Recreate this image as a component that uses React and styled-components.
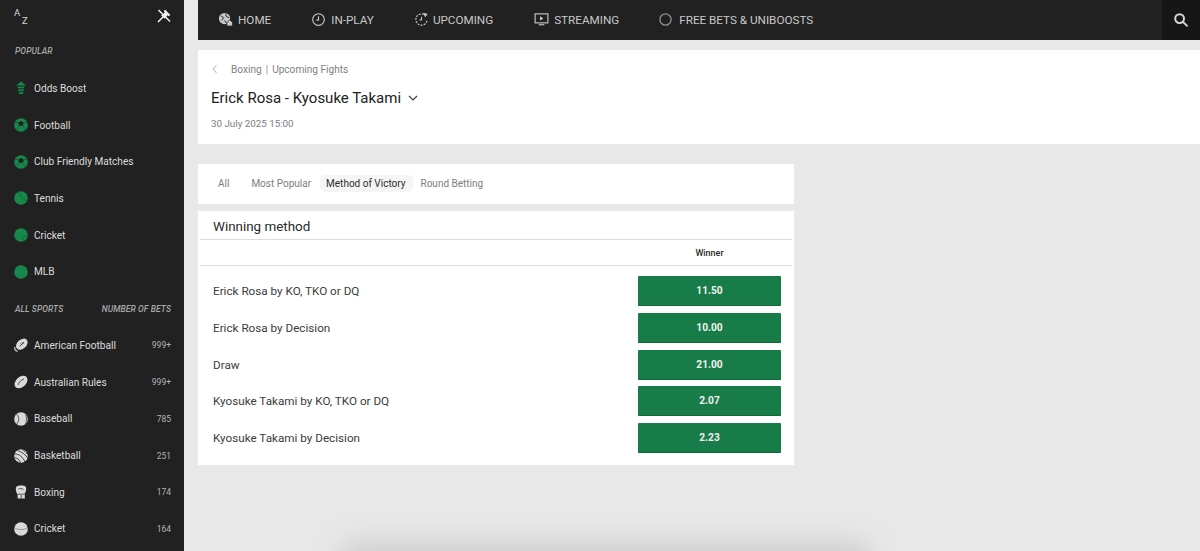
import React from 'react';
import styled, { createGlobalStyle } from 'styled-components';

const GlobalStyle = createGlobalStyle`
  html, body {
    margin: 0;
    height: 100%;
    overflow: hidden;
    background: #e8e8e8;
    font-family: Roboto, "Liberation Sans", sans-serif;
  }
  * { box-sizing: border-box; }
`;

const Page = styled.div`
  position: relative;
  display: flex;
  width: 1200px;
  height: 551px;
  overflow: hidden;
  background: #e8e8e8;
`;

const Sidebar = styled.aside`
  flex: 0 0 184px;
  height: 551px;
  padding: 0 13px 0 14px;
  background: #212121;
  overflow: hidden;
`;

const SideTop = styled.div`
  display: flex;
  justify-content: space-between;
  align-items: center;
  height: 32px;
`;

const AzMark = styled.div`
  position: relative;
  width: 16px;
  height: 18px;
  color: #d8d8d8;
  font-size: 9.5px;
  line-height: 9px;
`;

const AzLetter = styled.span`
  position: absolute;
  left: ${(p) => p.$x}px;
  top: ${(p) => p.$y}px;
`;

const SectionLabel = styled.div`
  display: flex;
  justify-content: space-between;
  align-items: center;
  height: ${(p) => p.$height}px;
  padding-left: 1px;
  color: #a9a9a9;
  font-size: 8.5px;
  font-style: italic;
  font-weight: 500;
  letter-spacing: 0.1px;
`;

const SportRow = styled.div`
  display: flex;
  align-items: center;
  height: 36.7px;
  gap: 6px;
  color: #dcdcdc;
  font-size: 10.1px;
`;

const SportIcon = styled.svg`
  flex: 0 0 14px;
  width: 14px;
  height: 14px;
  color: ${(p) => (p.$popular ? '#16884a' : '#d9d9d9')};
`;

const SportName = styled.span`
  flex: 1;
  white-space: nowrap;
`;

const BetCount = styled.span`
  color: #b4b4b4;
  font-size: 8.5px;
`;

const Main = styled.main`
  flex: 1;
  min-width: 0;
  padding-left: 14px;
`;

const TopNav = styled.nav`
  display: flex;
  align-items: center;
  height: 40px;
  background: #212121;
`;

const NavItem = styled.a`
  display: flex;
  align-items: center;
  gap: ${(p) => p.$gap || 5}px;
  margin-left: ${(p) => p.$left}px;
  padding-bottom: 1px;
  color: #c9c9c9;
  font-size: 11.7px;
  white-space: nowrap;
`;

const NavIcon = styled.svg`
  width: 15px;
  height: 15px;
  color: #c9c9c9;
`;

const SearchButton = styled.button`
  display: flex;
  align-items: center;
  justify-content: center;
  width: 38px;
  height: 40px;
  margin-left: auto;
  padding: 0;
  border: 0;
  background: #161616;
`;

const EventHeader = styled.header`
  height: 94px;
  margin-top: 10px;
  padding: 13px 13px 0;
  background: #fff;
`;

const Breadcrumb = styled.div`
  display: flex;
  align-items: center;
  height: 12px;
  color: #7f7f7f;
  font-size: 10.1px;
`;

const BackArrow = styled.svg`
  width: 8px;
  height: 10px;
  margin: 0 12px 0 0;
`;

const Separator = styled.span`
  margin: 0 4px;
  color: #8e8e8e;
`;

const EventTitle = styled.h1`
  display: flex;
  align-items: center;
  gap: 7px;
  margin: 12px 0 0;
  height: 22px;
  color: #212121;
  font-size: 15px;
  font-weight: 400;
  line-height: 22px;
`;

const EventDate = styled.div`
  margin-top: 9px;
  color: #7c7c7c;
  font-size: 9.8px;
`;

const Column = styled.div`
  width: 596px;
  margin-top: 20px;
`;

const Tabs = styled.div`
  display: flex;
  align-items: center;
  height: 40px;
  padding: 0 0 2px 14px;
  background: #fff;
`;

const Tab = styled.span`
  height: 17px;
  padding: 0 7px 0 6px;
  border-radius: 5px;
  margin-right: ${(p) => p.$gap}px;
  color: ${(p) => (p.$active ? '#2c2c2c' : '#7d7d7d')};
  background: ${(p) => (p.$active ? '#f5f5f5' : 'transparent')};
  font-size: 10px;
  line-height: 17px;
  white-space: nowrap;
`;

const MarketCard = styled.section`
  height: 254px;
  margin-top: 7px;
  padding: 0 2px;
  background: #fff;
`;

const MarketTitle = styled.h2`
  height: 29px;
  margin: 0;
  padding: 7px 0 0 13px;
  border-bottom: 1px solid #dcdcdc;
  color: #2a2a2a;
  font-size: 13.4px;
  font-weight: 400;
  line-height: 18px;
`;

const ColumnHead = styled.div`
  display: flex;
  justify-content: flex-end;
  align-items: center;
  height: 26px;
  padding-right: 11px;
  border-bottom: 1px solid #dcdcdc;
`;

const WinnerLabel = styled.span`
  width: 143px;
  color: #2c2c2c;
  font-size: 9px;
  font-weight: 500;
  text-align: center;
`;

const Selections = styled.div`
  display: flex;
  flex-direction: column;
  gap: 6.75px;
  padding: 10px 11px 0 13px;
`;

const Selection = styled.div`
  display: flex;
  justify-content: space-between;
  align-items: center;
  height: 30px;
  color: #3b3b3b;
  font-size: 11.7px;
`;

const OddsButton = styled.button`
  width: 143px;
  height: 30px;
  padding: 0;
  border: 0;
  border-bottom: 1px solid #0e6a39;
  border-radius: 1px;
  background: #177c47;
  color: #f2f2f2;
  font-family: inherit;
  font-size: 10.2px;
  font-weight: 700;
`;

const BottomShadow = styled.div`
  position: absolute;
  left: 350px;
  bottom: -36px;
  width: 510px;
  height: 36px;
  border-radius: 8px;
  background: #c8c8c8;
  box-shadow: 0 0 24px 10px rgba(196, 196, 196, 0.7);
  pointer-events: none;
`;

const icons = {
  boost: (
    <>
      <path d="M7 .6 L12 4.6 H2 Z" fill="currentColor" />
      <rect x="3.6" y="5.6" width="6.8" height="1.8" fill="currentColor" />
      <rect x="4.2" y="8.4" width="5.6" height="1.8" fill="currentColor" />
      <rect x="4.8" y="11.2" width="4.4" height="1.8" fill="currentColor" />
    </>
  ),
  football: (
    <>
      <circle cx="7" cy="7" r="6.8" fill="currentColor" />
      <path d="M7 2.8 L9.8 4.8 L8.8 7.8 H5.2 L4.2 4.8 Z" fill="#212121" />
      <path d="M5.2 7.8 L3.2 11 M8.8 7.8 L10.8 11 M4.2 4.8 L1.2 4.2 M9.8 4.8 L12.8 4.2" stroke="#212121" strokeWidth=".7" opacity=".6" />
    </>
  ),
  tennis: (
    <>
      <circle cx="7" cy="7" r="6.8" fill="currentColor" />
      <path d="M4 .9 C7 3.5 7.5 8.5 12.8 9.8" fill="none" stroke="#212121" strokeWidth=".5" opacity=".7" />
    </>
  ),
  cricket: (
    <>
      <circle cx="7" cy="7" r="6.8" fill="currentColor" />
      <path d="M9 12.6 C8 9.5 10 8 13 7.6" fill="none" stroke="#212121" strokeWidth=".5" opacity=".7" />
    </>
  ),
  mlb: <circle cx="7" cy="7" r="6.8" fill="currentColor" />,
  american: (
    <>
      <ellipse cx="7.8" cy="6.2" rx="6.6" ry="4.6" transform="rotate(-42 7.8 6.2)" fill="currentColor" />
      <path d="M5.6 8.4 L10 4 M6.4 5.4 L8.2 7.2 M7.8 4.2 L9.6 6" stroke="#212121" strokeWidth=".7" fill="none" />
      <path d="M1 9 C.4 11 1 13 3.6 13.4" stroke="currentColor" strokeWidth="1.1" fill="none" />
    </>
  ),
  aussie: (
    <>
      <ellipse cx="7" cy="7" rx="7.4" ry="5" transform="rotate(-42 7 7)" fill="currentColor" />
      <path d="M4 10 C5 7 7 5 10 4" stroke="#212121" strokeWidth=".7" fill="none" />
    </>
  ),
  baseball: (
    <>
      <circle cx="7" cy="7" r="6.8" fill="currentColor" />
      <path d="M2.6 2.2 C5.4 5 5.4 9.6 2.6 12 M11.6 2.4 C12.8 5 12.8 9.4 11.6 12" stroke="#212121" strokeWidth=".7" fill="none" />
    </>
  ),
  basketball: (
    <>
      <circle cx="7" cy="7" r="6.8" fill="currentColor" />
      <path d="M1 5 C5 5 9 8 11 13 M3.5 1.4 C8 3 12 6 13.6 9 M8 .4 C10 1.4 12 3 13.2 5 M.6 8.6 C3 8.8 5.4 10.6 6.6 13.6" stroke="#212121" strokeWidth=".8" fill="none" />
    </>
  ),
  boxing: (
    <>
      <path d="M2.6 1.4 C5 .2 10 .2 11.6 1.6 C12.6 3 12.2 6.4 10.8 8.6 V13.6 H3.6 V9.2 C1.8 7 1.2 2.8 2.6 1.4 Z" fill="currentColor" />
      <path d="M3.6 9.2 H10.8 M7.2 10 V13.6 M4.2 4.2 C6 3.2 8 3.4 9.6 4.6" stroke="#212121" strokeWidth=".7" fill="none" />
    </>
  ),
  ball: (
    <>
      <circle cx="7" cy="7" r="6.8" fill="currentColor" />
      <path d="M.8 6 C4 8 10 8 13.2 6" stroke="#212121" strokeWidth=".5" fill="none" opacity=".7" />
    </>
  ),
};

const popular = [
  { name: 'Odds Boost', icon: 'boost' },
  { name: 'Football', icon: 'football' },
  { name: 'Club Friendly Matches', icon: 'football' },
  { name: 'Tennis', icon: 'tennis' },
  { name: 'Cricket', icon: 'cricket' },
  { name: 'MLB', icon: 'mlb' },
];

const allSports = [
  { name: 'American Football', icon: 'american', count: '999+' },
  { name: 'Australian Rules', icon: 'aussie', count: '999+' },
  { name: 'Baseball', icon: 'baseball', count: '785' },
  { name: 'Basketball', icon: 'basketball', count: '251' },
  { name: 'Boxing', icon: 'boxing', count: '174' },
  { name: 'Cricket', icon: 'ball', count: '164' },
];

const selections = [
  { name: 'Erick Rosa by KO, TKO or DQ', odds: '11.50' },
  { name: 'Erick Rosa by Decision', odds: '10.00' },
  { name: 'Draw', odds: '21.00' },
  { name: 'Kyosuke Takami by KO, TKO or DQ', odds: '2.07' },
  { name: 'Kyosuke Takami by Decision', odds: '2.23' },
];

const tabs = [
  { label: 'All', gap: 9 },
  { label: 'Most Popular', gap: 2 },
  { label: 'Method of Victory', gap: 2, active: true },
  { label: 'Round Betting', gap: 0 },
];

const Row = ({ item, isPopular }) => (
  <SportRow>
    <SportIcon viewBox="0 0 14 14" $popular={isPopular}>{icons[item.icon]}</SportIcon>
    <SportName>{item.name}</SportName>
    {item.count && <BetCount>{item.count}</BetCount>}
  </SportRow>
);

const App = () => (
  <Page>
    <GlobalStyle />
    <Sidebar>
      <SideTop>
        <AzMark>
          <AzLetter $x={0} $y={1}>A</AzLetter>
          <AzLetter $x={8} $y={9}>Z</AzLetter>
        </AzMark>
        <svg width="14" height="14" viewBox="0 0 14 14">
          <path d="M1.5 1 L13 12.5 M1 13 L6 8" stroke="#f0f0f0" strokeWidth="1.5" fill="none" />
          <path d="M8 .6 L13.4 6 L11.6 7.2 L10.5 6.2 L7.6 9.8 L4.2 6.4 L7.8 3.5 L6.8 2.4 Z" fill="#f0f0f0" />
        </svg>
      </SideTop>
      <SectionLabel $height={38}>POPULAR</SectionLabel>
      {popular.map((item) => (
        <Row key={item.name} item={item} isPopular />
      ))}
      <SectionLabel $height={37}>
        <span>ALL SPORTS</span>
        <span>NUMBER OF BETS</span>
      </SectionLabel>
      {allSports.map((item) => (
        <Row key={item.name} item={item} />
      ))}
    </Sidebar>
    <Main>
      <TopNav>
        <NavItem $left={20}>
          <NavIcon viewBox="0 0 16 16">
            <circle cx="7" cy="7" r="6" fill="currentColor" />
            <path d="M3 4 L6 6 L4 9 M8 2 L9 5 L12 6 M7 9 L9 12" stroke="#212121" strokeWidth="1" fill="none" />
            <path d="M9.5 11 L12.5 8.5 L15.5 11 V15 H9.5 Z" fill="currentColor" stroke="#212121" strokeWidth=".8" />
          </NavIcon>
          HOME
        </NavItem>
        <NavItem $left={40}>
          <NavIcon viewBox="0 0 16 16">
            <circle cx="8" cy="8" r="6.2" fill="none" stroke="currentColor" strokeWidth="1.2" />
            <path d="M8 4.6 V8.6 H5.8" fill="none" stroke="currentColor" strokeWidth="1.2" />
          </NavIcon>
          IN-PLAY
        </NavItem>
        <NavItem $left={40} $gap={4}>
          <NavIcon viewBox="0 0 16 16">
            <path d="M13.8 9.5 A6 6 0 1 1 10.5 2.6" fill="none" stroke="currentColor" strokeWidth="1.3" strokeDasharray="2 1.3" />
            <path d="M8 5 V8.5 H5.8" fill="none" stroke="currentColor" strokeWidth="1.1" />
            <path d="M10 .8 L14.6 2 L11.8 5.6 Z" fill="currentColor" />
          </NavIcon>
          UPCOMING
        </NavItem>
        <NavItem $left={41} $gap={5}>
          <NavIcon viewBox="0 0 16 16">
            <rect x="1.2" y="2" width="13.6" height="9.6" fill="none" stroke="currentColor" strokeWidth="1.2" />
            <path d="M6.4 4.6 L10 6.8 L6.4 9 Z" fill="currentColor" />
            <path d="M5 13.6 H11" stroke="currentColor" strokeWidth="1.2" />
          </NavIcon>
          STREAMING
        </NavItem>
        <NavItem $left={39} $gap={6}>
          <NavIcon viewBox="0 0 16 16">
            <circle cx="8" cy="8" r="6" fill="none" stroke="#8f8f8f" strokeWidth="1.4" />
          </NavIcon>
          FREE BETS &amp; UNIBOOSTS
        </NavItem>
        <SearchButton aria-label="Search">
          <svg width="16" height="16" viewBox="0 0 16 16">
            <circle cx="6.6" cy="6.6" r="4.4" fill="none" stroke="#d6d6d6" strokeWidth="2" />
            <path d="M10 10 L14.6 14.4" stroke="#d6d6d6" strokeWidth="1.8" />
          </svg>
        </SearchButton>
      </TopNav>
      <EventHeader>
        <Breadcrumb>
          <BackArrow viewBox="0 0 8 10">
            <path d="M5.5 1 L2 5 L5.5 9" fill="none" stroke="#b5b5b5" strokeWidth="1" />
          </BackArrow>
          Boxing<Separator>|</Separator>Upcoming Fights
        </Breadcrumb>
        <EventTitle>
          Erick Rosa - Kyosuke Takami
          <svg width="10" height="6" viewBox="0 0 10 6">
            <path d="M1 1 L5 5 L9 1" fill="none" stroke="#3a3a3a" strokeWidth="1.1" />
          </svg>
        </EventTitle>
        <EventDate>30 July 2025 15:00</EventDate>
      </EventHeader>
      <Column>
        <Tabs>
          {tabs.map((tab) => (
            <Tab key={tab.label} $gap={tab.gap} $active={tab.active}>{tab.label}</Tab>
          ))}
        </Tabs>
        <MarketCard>
          <MarketTitle>Winning method</MarketTitle>
          <ColumnHead>
            <WinnerLabel>Winner</WinnerLabel>
          </ColumnHead>
          <Selections>
            {selections.map((s) => (
              <Selection key={s.name}>
                {s.name}
                <OddsButton>{s.odds}</OddsButton>
              </Selection>
            ))}
          </Selections>
        </MarketCard>
      </Column>
    </Main>
    <BottomShadow />
  </Page>
);

export default App;
